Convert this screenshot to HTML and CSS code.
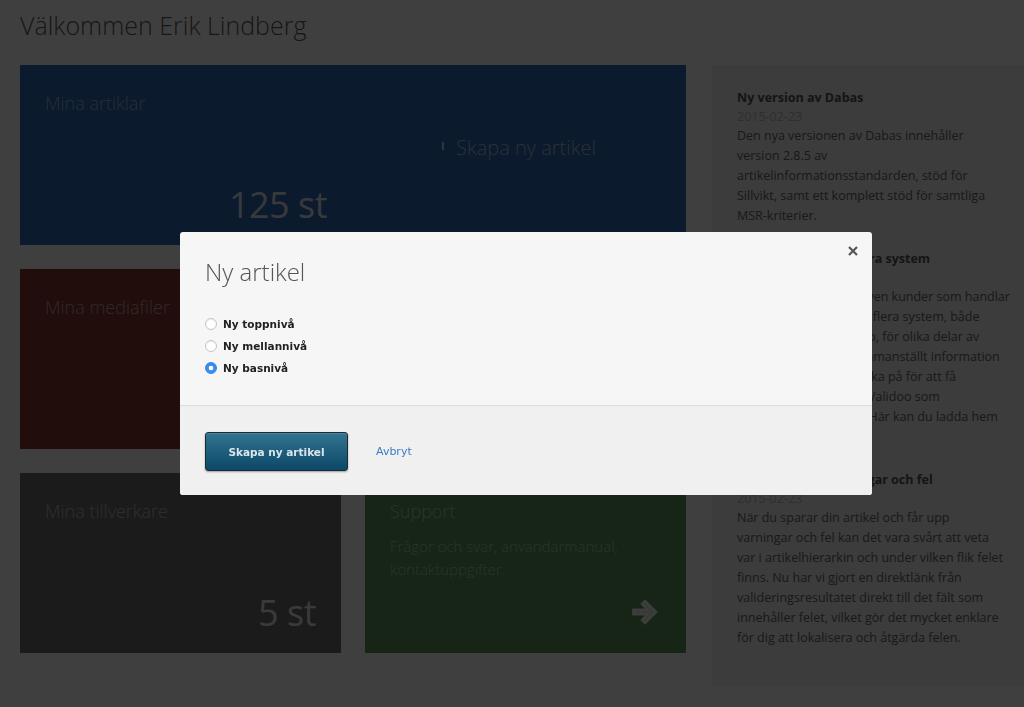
FILE: index.html
```html
<!DOCTYPE html>
<html lang="sv">
	<head>
		<title>Dabas - Startsida</title>
		<meta charset="UTF-8">
		<meta name="viewport" content="width=device-width, initial-scale=1">
		<link rel="stylesheet" href="styles.css">
	</head>
	<body>
		<div id="page">
			<h1 class="welcome">Välkommen Erik Lindberg</h1>
			<div class="layout">
				<div class="tiles">
					<div class="tile tile-articles">
						<div class="tile-half">
							<div class="tile-title">Mina artiklar</div>
							<div class="tile-count">125 st</div>
						</div>
						<div class="tile-half tile-action">
							<a class="tile-link" href="#"><span class="plus"></span>Skapa ny artikel</a>
						</div>
					</div>
					<div class="tile tile-media">
						<div class="tile-title">Mina mediafiler</div>
					</div>
					<div class="tile tile-lists">
						<div class="tile-title">Mina listor</div>
					</div>
					<div class="tile tile-makers">
						<div class="tile-title">Mina tillverkare</div>
						<div class="tile-count">5 st</div>
					</div>
					<div class="tile tile-support">
						<div class="tile-title">Support</div>
						<div class="tile-text">Frågor och svar, användarmanual, kontaktuppgifter.</div>
						<svg class="tile-arrow" width="30" height="30" viewBox="0 0 30 30">
							<path d="M3 12.5 H17 L11.5 7 L15 3.5 L26.5 15 L15 26.5 L11.5 23 L17 17.5 H3 Z" stroke-linejoin="round" stroke-width="2"/>
						</svg>
					</div>
				</div>
				<div id="news">
					<div class="news-item">
						<h3>Ny version av Dabas</h3>
						<div class="date">2015-02-23</div>
						<p>Den nya versionen av Dabas innehåller<br>
						version 2.8.5 av<br>
						artikelinformationsstandarden, stöd för<br>
						Sillvikt, samt ett komplett stöd för samtliga<br>
						MSR-kriterier.</p>
					</div>
					<div class="news-item">
						<h3>Levererar data till flera system</h3>
						<div class="date">2015-02-23</div>
						<p>Man vet att det finns även kunder som handlar<br>
						artikelinformation från flera system, både<br>
						Dabas och även Validoo, för olika delar av<br>
						sortimentet. Vi har sammanställt information<br>
						om vad man måste tänka på för att få<br>
						rätta data i Dabas och Validoo som<br>
						leverantör till kunden. Här kan du ladda hem<br>
						vår sammanställning.</p>
					</div>
					<div class="news-item">
						<h3>Direktlänk till varningar och fel</h3>
						<div class="date">2015-02-23</div>
						<p>När du sparar din artikel och får upp<br>
						varningar och fel kan det vara svårt att veta<br>
						var i artikelhierarkin och under vilken flik felet<br>
						finns. Nu har vi gjort en direktlänk från<br>
						valideringsresultatet direkt till det fält som<br>
						innehåller felet, vilket gör det mycket enklare<br>
						för dig att lokalisera och åtgärda felen.</p>
					</div>
				</div>
			</div>
		</div>

		<div id="overlay"></div>
		<div id="modal">
			<a class="close" href="#">
				<svg width="10" height="10" viewBox="0 0 10 10"><path d="M1 1 L9 9 M9 1 L1 9"/></svg>
			</a>
			<div class="modal-body">
				<h2>Ny artikel</h2>
				<form class="levels">
					<label><input type="radio" name="level" value="top" /> Ny toppnivå</label>
					<label><input type="radio" name="level" value="mid" /> Ny mellannivå</label>
					<label><input type="radio" name="level" value="base" checked /> Ny basnivå</label>
				</form>
			</div>
			<div class="modal-footer">
				<input class="btn-primary" type="button" value="Skapa ny artikel" />
				<a class="cancel" href="#">Avbryt</a>
			</div>
		</div>
	</body>
</html>
```

FILE: styles.css
```css
html, body {
	margin: 0;
	overflow: hidden;
	height: 100%;
}
body {
	background: #fff;
	font-family: "Open Sans", sans-serif;
	color: #666;
}
#page {
	padding: 8px 20px 0;
	width: 1100px;
}
.welcome {
	margin: 0 0 23px;
	font-size: 25px;
	line-height: 34px;
	font-weight: 300;
	color: #5a5a5a;
}
.layout {
	display: flex;
	gap: 26px;
	align-items: flex-start;
}
.tiles {
	display: grid;
	grid-template-columns: 321px 321px;
	grid-auto-rows: 180px;
	gap: 24px 24px;
}
.tile {
	position: relative;
	box-sizing: border-box;
	padding: 25px;
	display: flex;
	flex-direction: column;
	color: rgba(255,255,255,0.85);
}
.tile-title {
	font-size: 18px;
	line-height: 26px;
	font-weight: 300;
	color: rgba(255,255,255,0.55);
}
.tile-count {
	margin-top: auto;
	margin-bottom: -3px;
	text-align: right;
	font-size: 36px;
	line-height: 43px;
	font-weight: 400;
	letter-spacing: -0.5px;
}
.tile-articles {
	grid-column: span 2;
	flex-direction: row;
	padding: 0;
	background: #2c68b0;
}
.tile-half {
	width: 333px;
	box-sizing: border-box;
	padding: 25px 26px 22px 25px;
	display: flex;
	flex-direction: column;
}
.tile-action {
	flex: 1;
	align-items: center;
	justify-content: center;
	padding-bottom: 41px;
}
.tile-link {
	color: rgba(255,255,255,0.6);
	text-decoration: none;
	font-size: 20px;
	font-weight: 300;
	display: flex;
	align-items: center;
}
.plus {
	width: 2px;
	height: 8px;
	background: rgba(255,255,255,0.7);
	margin-right: 12px;
	margin-top: -3px;
}
.tile-media { background: #84342c; }
.tile-lists { background: #8a6a2a; }
.tile-makers { background: #6c6c6c; padding-bottom: 22px; }
.tile-support { background: #5c945c; }
.tile-text {
	margin-top: 11px;
	font-size: 15px;
	line-height: 23px;
	font-weight: 300;
	color: rgba(255,255,255,0.5);
}
.tile-arrow {
	position: absolute;
	right: 26px;
	bottom: 26px;
	fill: rgba(255,255,255,0.85);
	stroke: rgba(255,255,255,0.85);
}

#news {
	width: 320px;
	flex-shrink: 0;
	box-sizing: border-box;
	padding: 23px 25px 15px;
	background: #f0f0f0;
	font-size: 12.5px;
}
.news-item {
	margin-bottom: 23px;
	white-space: nowrap;
}
.news-item h3 {
	margin: 0;
	font-size: 12.5px;
	line-height: 19px;
	font-weight: 700;
	color: #555;
}
.news-item .date {
	line-height: 19px;
	color: #bbb;
}
.news-item p {
	margin: 0;
	line-height: 20px;
	color: #666;
}

#overlay {
	position: fixed;
	top: 0;
	left: 0;
	right: 0;
	bottom: 0;
	background: rgba(0,0,0,0.752);
}
#modal {
	position: absolute;
	top: 232px;
	left: 180px;
	width: 692px;
	background: #f6f6f6;
	border-radius: 3px;
	overflow: hidden;
	font-family: "DejaVu Sans", Verdana, sans-serif;
}
.close {
	position: absolute;
	top: 14px;
	right: 14px;
	display: block;
	width: 10px;
	height: 10px;
}
.close svg {
	display: block;
	stroke: #555;
	stroke-width: 2.2;
}
.modal-body {
	padding: 24px 25px 30px;
	border-bottom: 1px solid #dcdcdc;
}
.modal-body h2 {
	margin: 0 0 29px;
	font-family: "Open Sans", sans-serif;
	font-size: 24px;
	line-height: 32px;
	font-weight: 300;
	color: #555;
}
.levels {
	margin: 0;
	display: flex;
	flex-direction: column;
	gap: 8px;
}
.levels label {
	display: flex;
	align-items: center;
	height: 14px;
	font-size: 10.5px;
	font-weight: bold;
	color: #222;
}
.levels input {
	appearance: none;
	-webkit-appearance: none;
	margin: 0 6px 0 0;
	width: 12px;
	height: 12px;
	border-radius: 50%;
	border: 1px solid #c4c4c4;
	background: #fff;
	box-shadow: inset 0 1px 1px rgba(0,0,0,0.08);
	box-sizing: border-box;
}
.levels input:checked {
	border-color: #2f86ea;
	background: radial-gradient(circle, #fff 0, #fff 2px, #3a8fef 2.6px);
}
.modal-footer {
	display: flex;
	align-items: center;
	padding: 26px 25px 24px;
	background: #f0f0f0;
}
.btn-primary {
	width: 143px;
	height: 39px;
	border: 1px solid #1b2a35;
	border-radius: 3px;
	background: linear-gradient(#32748f, #0c4868);
	box-shadow: 0 1px 2px rgba(0,0,0,0.35), inset 0 1px 0 rgba(255,255,255,0.12);
	color: #dbe6ec;
	font-family: "DejaVu Sans", Verdana, sans-serif;
	font-size: 10.5px;
	font-weight: bold;
	padding: 0;
}
.cancel {
	margin-left: 28px;
	font-size: 11px;
	color: #3b7cc9;
	text-decoration: none;
}
```
